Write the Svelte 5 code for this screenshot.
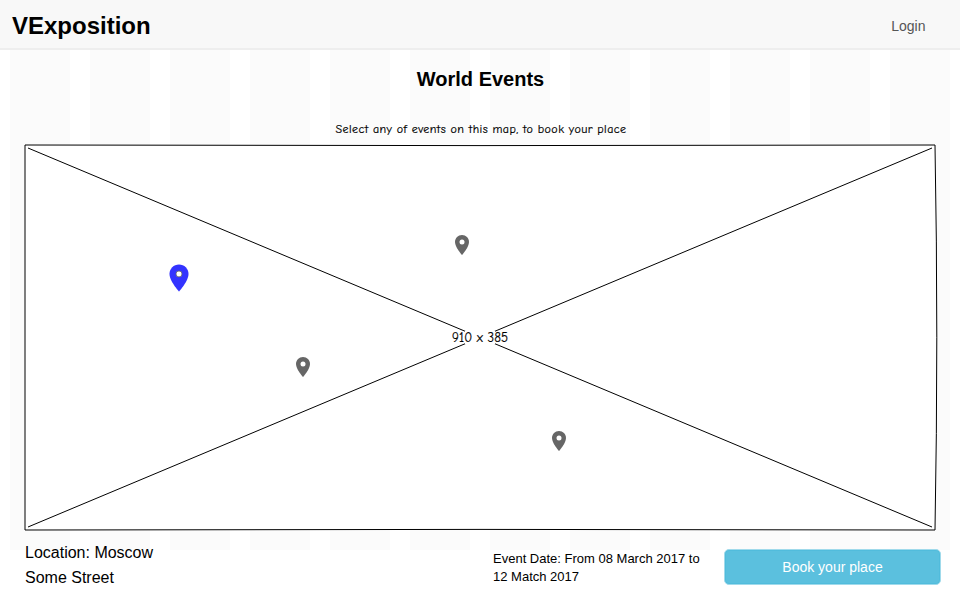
<script>
  const pins = [
    { x: 169, y: 264, w: 20, h: 28, color: '#3333ff', active: true },
    { x: 455, y: 235, w: 14, h: 20, color: '#666666' },
    { x: 296, y: 357, w: 14, h: 20, color: '#666666' },
    { x: 552, y: 431, w: 14, h: 20, color: '#666666' }
  ];
</script>

<div class="page">
  <header>
    <h1>VExposition</h1>
    <a href="#login">Login</a>
  </header>

  <main>
    <h2>World Events</h2>
    <p class="hint">Select any of events on this map, to book your place</p>

    <div class="map">
      <svg class="frame" width="914" height="387" viewBox="24 144 914 387">
        <path
          d="M25 145 Q480 146.2 935 145 Q938.6 337 935 530 Q480 528.8 25 530 Z"
          fill="#fff" stroke="#000" stroke-width="1" stroke-linejoin="round" />
        <path d="M28 148 L932 527 M932 148 L28 527" fill="none" stroke="#000" stroke-width="1" />
        <rect x="451" y="332" width="58" height="11" fill="#fff" stroke="none" />
        <rect x="465" y="331" width="30" height="13" fill="#fff" stroke="none" />
        <text x="452" y="342" textLength="56">910 x 385</text>
      </svg>
      {#each pins as pin}
        <svg
          class="pin" viewBox={pin.active ? '-.35 -.35 14.7 20.7' : '0 0 14 20'} preserveAspectRatio="none"
          style="left: {pin.x - 24}px; top: {pin.y - 144}px; width: {pin.w}px; height: {pin.h}px">
          <path d="M7 0 C3.1 0 0 3.1 0 7 C0 12.2 7 20 7 20 S14 12.2 14 7 C14 3.1 10.9 0 7 0Z" fill={pin.color} />
          <circle cx="7" cy="7" r={pin.active ? 2.2 : 2.5} fill="#fff" stroke={pin.active ? '#666' : 'none'} stroke-width=".6" />
        </svg>
      {/each}
    </div>
  </main>

  <footer>
    <p class="location">Location: Moscow<br />Some Street</p>
    <p class="date">Event Date: From 08 March 2017 to<br />12 Match 2017</p>
    <button>Book your place</button>
  </footer>
</div>

<style>
  :global(body) { margin: 0; background: #fff; }
  .page {
    width: 960px;
    height: 600px;
    overflow: hidden;
    display: flex;
    flex-direction: column;
    color: #000;
    font-family: "Liberation Sans", Arial, sans-serif;
    background: repeating-linear-gradient(90deg, #fbfbfb 0 60px, #fff 60px 80px) 10px 50px / 940px 500px no-repeat;
  }
  h1, h2, p { margin: 0; }
  header {
    box-sizing: border-box;
    height: 50px;
    flex: none;
    display: flex;
    justify-content: space-between;
    align-items: center;
    padding: 3px 34.5px 0 12px;
    background: #f8f8f8;
    border-bottom: 2px solid #eee;
  }
  h1 { font-size: 24px; line-height: 28px; }
  header a { color: #555; font-size: 14px; text-decoration: none; }
  main { flex: none; height: 481px; }
  h2 {
    padding-top: 17px;
    padding-left: 1px;
    text-align: center;
    font-size: 20px;
    line-height: 24px;
  }
  .hint {
    padding: 30px 0 0 335.5px;
    height: 23px;
    line-height: 16px;
    font-family: "Comic Sans MS", "Comic Neue", "Open Sans", sans-serif;
    font-size: 12px;
    letter-spacing: .42px;
    -webkit-text-stroke: .2px #000;
    white-space: nowrap;
  }
  .map { position: relative; width: 914px; height: 387px; margin-left: 24px; }
  .frame { display: block; }
  .frame text {
    font-family: "Comic Sans MS", "Comic Neue", "Open Sans", sans-serif;
    font-size: 13px;
    stroke: #000;
    stroke-width: .2px;
  }
  .pin { position: absolute; }
  footer { flex: 1; display: flex; padding-left: 25px; }
  .location { width: 468px; padding-top: 9px; font-size: 16px; line-height: 25px; }
  .date { width: 231px; padding-top: 19px; font-size: 13px; line-height: 18px; }
  button {
    box-sizing: border-box;
    width: 217px;
    height: 36px;
    margin-top: 18px;
    padding: 0;
    border: 1px solid #a0daeb;
    border-radius: 5px;
    background: #5bc0de;
    box-shadow: inset 0 0 0 1px #51bcdc;
    color: #fff;
    font: 14px "Liberation Sans", Arial, sans-serif;
  }
</style>
